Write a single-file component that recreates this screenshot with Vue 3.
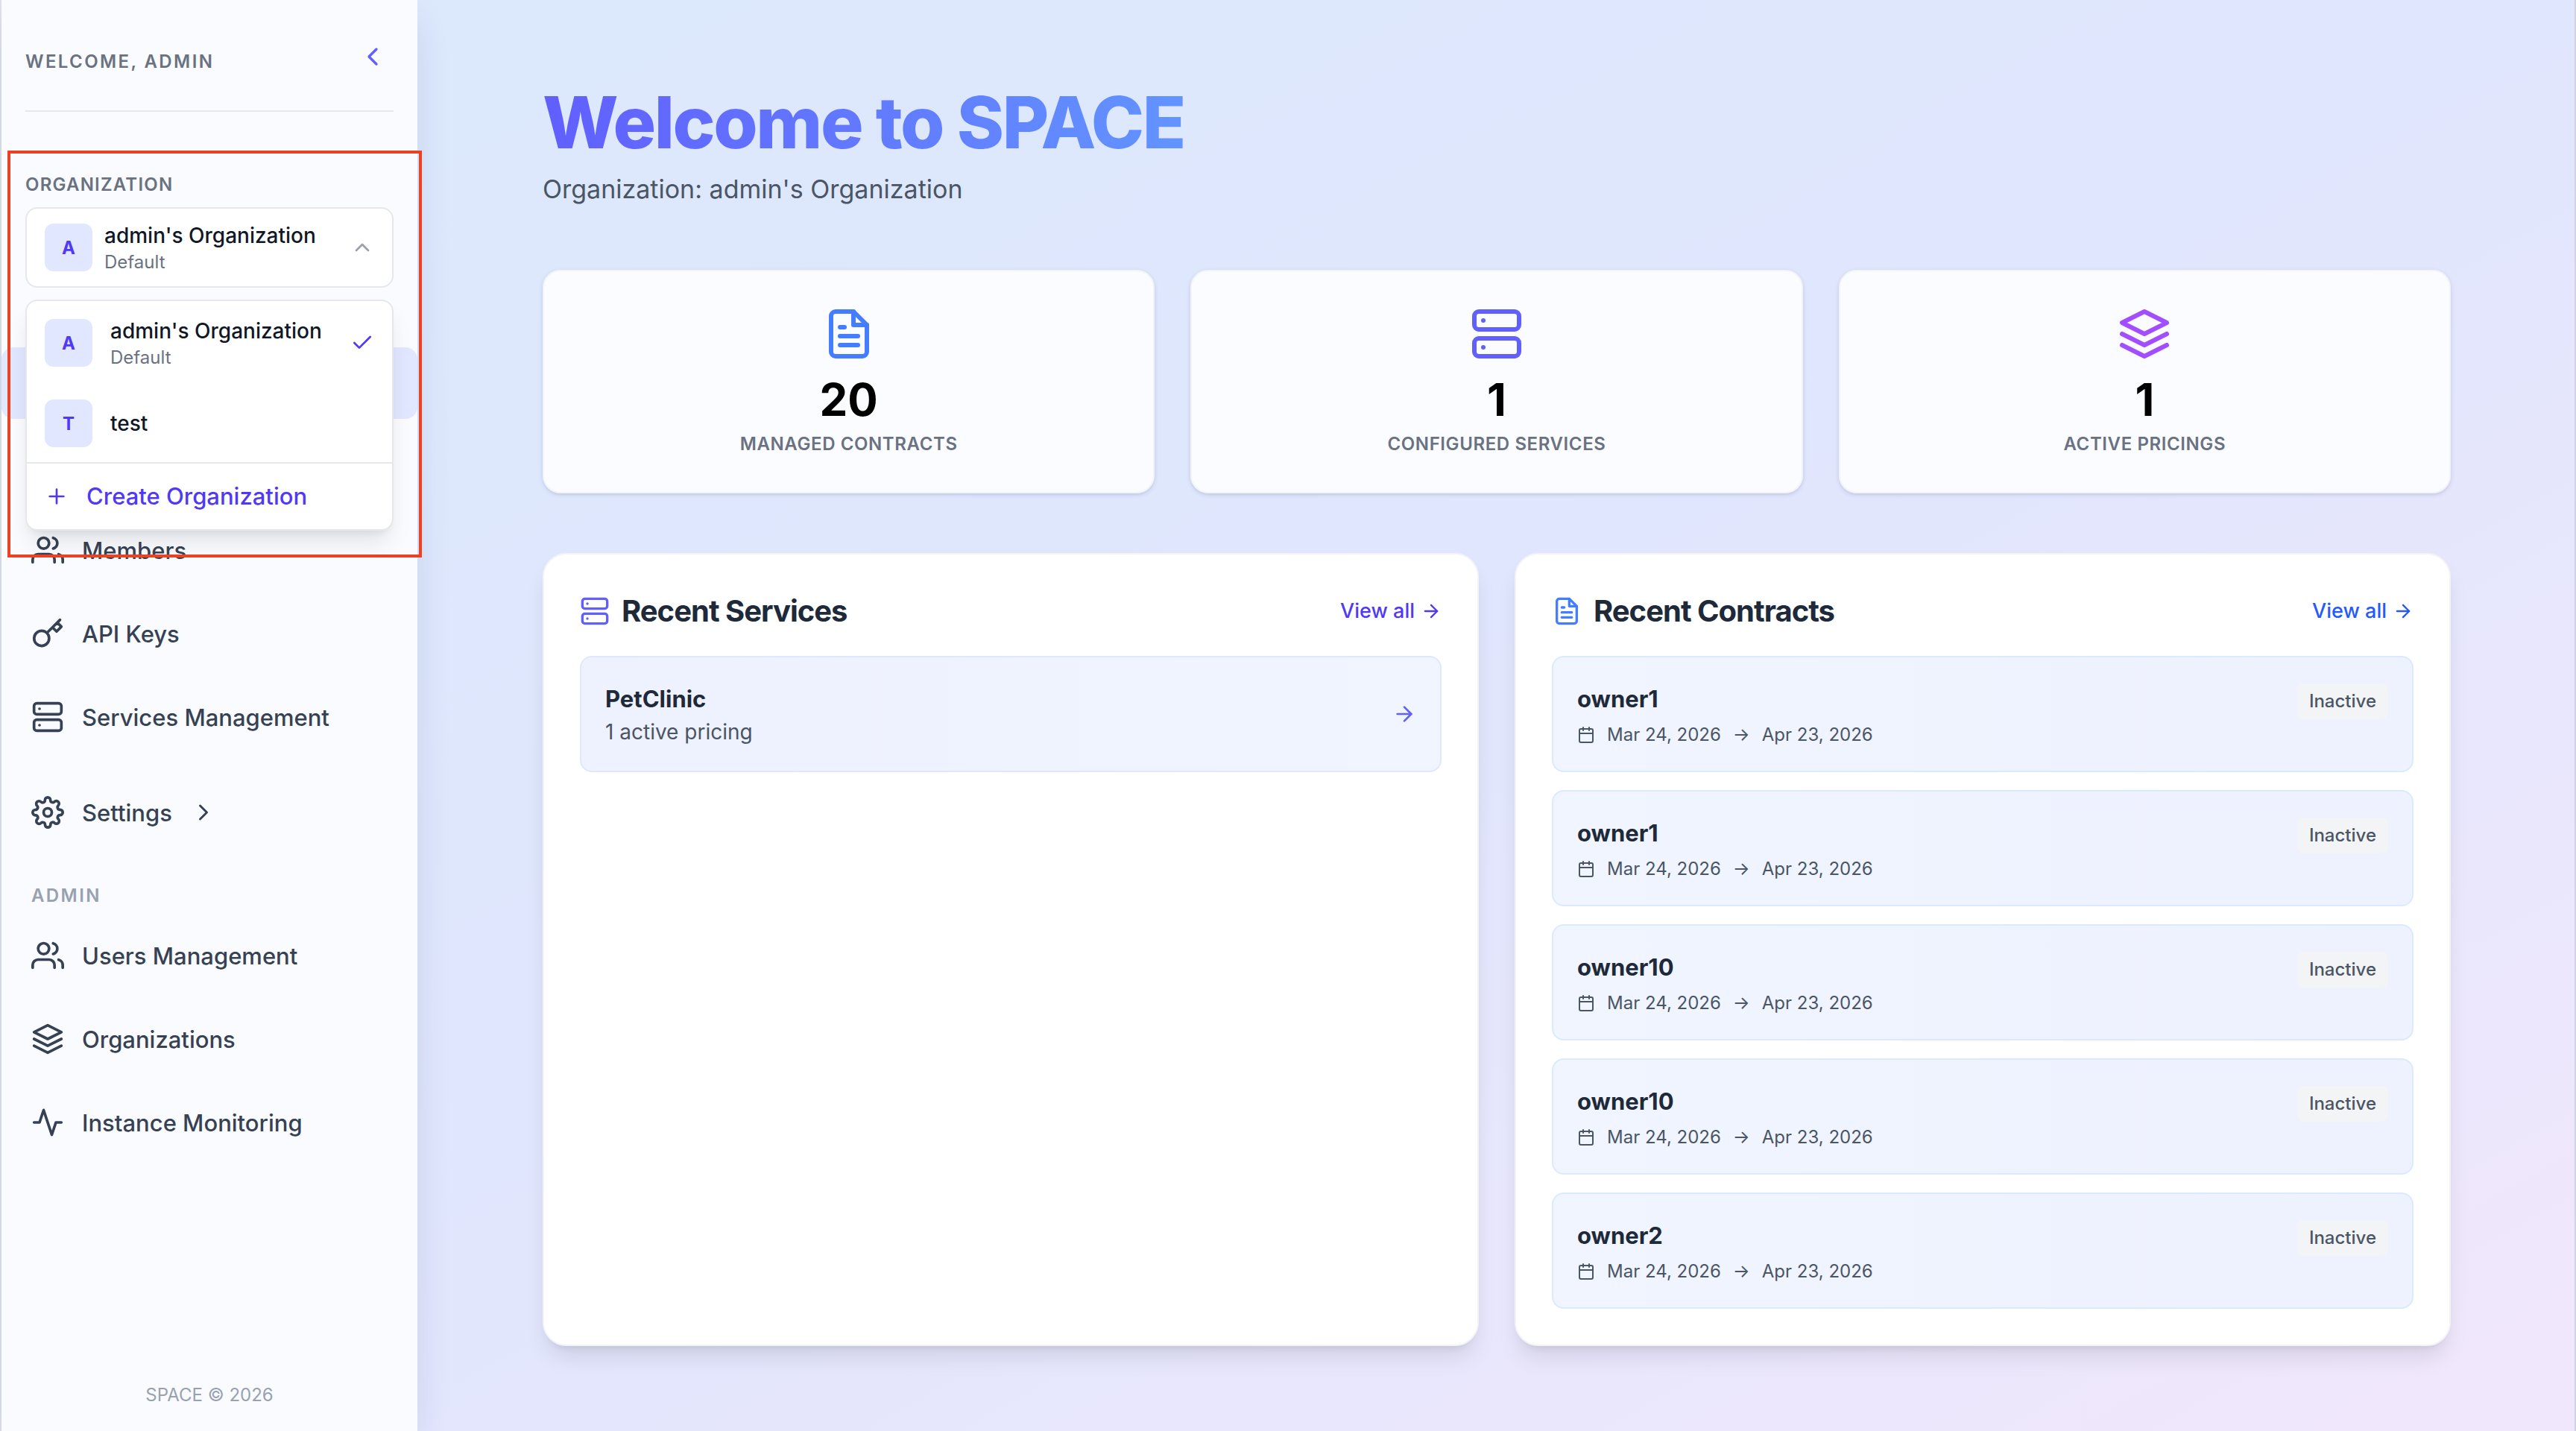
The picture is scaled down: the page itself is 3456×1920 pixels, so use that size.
<script setup>
import { ref, h } from 'vue';

// 24x24 outline icons
const iconPaths = {
  users: [
    'M17 21v-2a4 4 0 0 0-4-4H5a4 4 0 0 0-4 4v2',
    'M9 3a4 4 0 1 0 0 8 4 4 0 0 0 0-8z',
    'M23 21v-2a4 4 0 0 0-3-3.87',
    'M16 3.13a4 4 0 0 1 0 7.75',
  ],
  key: ['M21 2l-2 2m-7.61 7.61a5.5 5.5 0 1 1-7.778 7.778 5.5 5.5 0 0 1 7.777-7.777zm0 0L15.5 7.5m0 0l3 3L22 7l-3-3m-3.5 3.5L19 4'],
  server: [
    'M4 2h16a2 2 0 0 1 2 2v4a2 2 0 0 1-2 2H4a2 2 0 0 1-2-2V4a2 2 0 0 1 2-2z',
    'M4 14h16a2 2 0 0 1 2 2v4a2 2 0 0 1-2 2H4a2 2 0 0 1-2-2v-4a2 2 0 0 1 2-2z',
    'M6 6h.01',
    'M6 18h.01',
  ],
  settings: [
    'M12 9a3 3 0 1 0 0 6 3 3 0 0 0 0-6z',
    'M19.4 15a1.65 1.65 0 0 0 .33 1.82l.06.06a2 2 0 0 1 0 2.83 2 2 0 0 1-2.83 0l-.06-.06a1.65 1.65 0 0 0-1.82-.33 1.65 1.65 0 0 0-1 1.51V21a2 2 0 0 1-2 2 2 2 0 0 1-2-2v-.09A1.65 1.65 0 0 0 9 19.4a1.65 1.65 0 0 0-1.82.33l-.06.06a2 2 0 0 1-2.83 0 2 2 0 0 1 0-2.83l.06-.06a1.65 1.65 0 0 0 .33-1.82 1.65 1.65 0 0 0-1.51-1H3a2 2 0 0 1-2-2 2 2 0 0 1 2-2h.09A1.65 1.65 0 0 0 4.6 9a1.65 1.65 0 0 0-.33-1.82l-.06-.06a2 2 0 0 1 0-2.83 2 2 0 0 1 2.83 0l.06.06a1.65 1.65 0 0 0 1.82.33H9a1.65 1.65 0 0 0 1-1.51V3a2 2 0 0 1 2-2 2 2 0 0 1 2 2v.09a1.65 1.65 0 0 0 1 1.51 1.65 1.65 0 0 0 1.82-.33l.06-.06a2 2 0 0 1 2.83 0 2 2 0 0 1 0 2.83l-.06.06a1.65 1.65 0 0 0-.33 1.82V9a1.65 1.65 0 0 0 1.51 1H21a2 2 0 0 1 2 2 2 2 0 0 1-2 2h-.09a1.65 1.65 0 0 0-1.51 1z',
  ],
  layers: ['M12 2L2 7l10 5 10-5-10-5z', 'M2 17l10 5 10-5', 'M2 12l10 5 10-5'],
  activity: ['M22 12h-4l-3 9L9 3l-3 9H2'],
  file: [
    'M14 2H6a2 2 0 0 0-2 2v16a2 2 0 0 0 2 2h12a2 2 0 0 0 2-2V8z',
    'M14 2v6h6',
    'M16 13H8',
    'M16 17H8',
    'M10 9H8',
  ],
  calendar: [
    'M5 4h14a2 2 0 0 1 2 2v14a2 2 0 0 1-2 2H5a2 2 0 0 1-2-2V6a2 2 0 0 1 2-2z',
    'M16 2v4',
    'M8 2v4',
    'M3 10h18',
  ],
  arrow: ['M5 12h14', 'M12 5l7 7-7 7'],
  left: ['M15 18l-6-6 6-6'],
  right: ['M9 18l6-6-6-6'],
  up: ['M18 15l-6-6-6 6'],
  check: ['M20 6L9 17l-5-5'],
  plus: ['M12 5v14', 'M5 12h14'],
};

const Icon = (props) =>
  h('svg', { viewBox: '0 0 24 24', class: 'icon', 'aria-hidden': 'true' },
    iconPaths[props.name].map((d) => h('path', { d })));
Icon.props = ['name'];

const menuOpen = ref(true);
const selected = ref(0);
const organizations = [
  { name: "admin's Organization", initial: 'A', isDefault: true },
  { name: 'test', initial: 'T', isDefault: false },
];

const pickOrganization = (index) => {
  selected.value = index;
  menuOpen.value = false;
};

const mainLinks = [
  { label: 'Members', icon: 'users' },
  { label: 'API Keys', icon: 'key' },
  { label: 'Services Management', icon: 'server' },
];
const adminLinks = [
  { label: 'Users Management', icon: 'users' },
  { label: 'Organizations', icon: 'layers' },
  { label: 'Instance Monitoring', icon: 'activity' },
];

const stats = [
  { value: 20, label: 'Managed Contracts', icon: 'file', tone: 'blue' },
  { value: 1, label: 'Configured Services', icon: 'server', tone: 'indigo' },
  { value: 1, label: 'Active Pricings', icon: 'layers', tone: 'purple' },
];

const services = [{ name: 'PetClinic', detail: '1 active pricing' }];
const contracts = ['owner1', 'owner1', 'owner10', 'owner10', 'owner2'].map((owner) => ({
  owner,
  start: 'Mar 24, 2026',
  end: 'Apr 23, 2026',
  status: 'Inactive',
}));
</script>

<template>
  <div class="page">
    <aside class="sidebar">
      <div class="sidebar-head">
        <span class="greeting">WELCOME, ADMIN</span>
        <button type="button" class="collapse" aria-label="Collapse sidebar"><Icon name="left" /></button>
      </div>

      <div class="org">
        <div id="org-label" class="org-label">ORGANIZATION</div>
        <div class="org-picker">
          <button type="button" class="org-current" aria-labelledby="org-label" :aria-expanded="menuOpen" @click="menuOpen = !menuOpen">
            <span class="avatar">{{ organizations[selected].initial }}</span>
            <span class="org-text">
              <span class="org-name">{{ organizations[selected].name }}</span>
              <span v-if="organizations[selected].isDefault" class="org-note">Default</span>
            </span>
            <Icon name="up" class="small-icon muted" />
          </button>

          <div v-if="menuOpen" class="org-menu">
            <button v-for="(org, index) in organizations" :key="org.name" type="button" class="org-option" @click="pickOrganization(index)">
              <span class="avatar">{{ org.initial }}</span>
              <span class="org-text">
                <span class="org-name">{{ org.name }}</span>
                <span v-if="org.isDefault" class="org-note">Default</span>
              </span>
              <Icon v-if="index === selected" name="check" class="small-icon" />
            </button>
            <button type="button" class="org-create">
              <Icon name="plus" class="small-icon" />
              <span>Create Organization</span>
            </button>
          </div>
        </div>
      </div>

      <nav class="nav">
        <a href="#" class="nav-link active" aria-label="Dashboard"></a>
        <a href="#" class="nav-link" aria-label="Contracts"></a>
        <a v-for="link in mainLinks" :key="link.label" href="#" class="nav-link">
          <Icon :name="link.icon" />
          <span>{{ link.label }}</span>
        </a>
        <button type="button" class="nav-link settings">
          <Icon name="settings" />
          <span>Settings</span>
          <Icon name="right" class="nav-chevron" />
        </button>
        <div class="nav-title">ADMIN</div>
        <a v-for="link in adminLinks" :key="link.label" href="#" class="nav-link">
          <Icon :name="link.icon" />
          <span>{{ link.label }}</span>
        </a>
      </nav>

      <footer class="sidebar-foot">SPACE © 2026</footer>
      <div class="highlight"></div>
    </aside>

    <main class="main">
      <div class="content">
        <header class="hero">
          <h1>Welcome to SPACE</h1>
          <p>Organization: admin's Organization</p>
        </header>

        <section class="stats">
          <div v-for="stat in stats" :key="stat.label" class="stat">
            <Icon :name="stat.icon" :class="stat.tone" />
            <div class="stat-value">{{ stat.value }}</div>
            <div class="stat-label">{{ stat.label }}</div>
          </div>
        </section>

        <div class="panels">
          <section class="panel">
            <div class="panel-head">
              <Icon name="server" class="indigo" />
              <h2>Recent Services</h2>
              <a href="#" class="view-all">View all <Icon name="arrow" /></a>
            </div>
            <div v-for="service in services" :key="service.name" class="entry service">
              <div>
                <h3>{{ service.name }}</h3>
                <p class="detail">{{ service.detail }}</p>
              </div>
              <Icon name="arrow" class="small-icon indigo" />
            </div>
          </section>

          <section class="panel">
            <div class="panel-head">
              <Icon name="file" class="blue" />
              <h2>Recent Contracts</h2>
              <a href="#" class="view-all view-blue">View all <Icon name="arrow" /></a>
            </div>
            <div v-for="(contract, index) in contracts" :key="index" class="entry contract">
              <div>
                <h3>{{ contract.owner }}</h3>
                <p class="dates">
                  <Icon name="calendar" />
                  <span>{{ contract.start }}</span>
                  <span>→</span>
                  <span>{{ contract.end }}</span>
                </p>
              </div>
              <span class="badge">{{ contract.status }}</span>
            </div>
          </section>
        </div>
      </div>
    </main>
  </div>
</template>

<style>
body {
  margin: 0;
}
</style>

<style scoped>
.page {
  display: flex;
  min-height: 100vh;
  box-sizing: border-box;
  border-left: 2px solid #dfe2ea;
  border-right: 2px solid #d3d1e6;
  background: linear-gradient(to bottom right, #dbe9fc, #e0e6fd 50%, #f1e7fc);
  font-family: Inter, "Liberation Sans", sans-serif;
  color: #1e2939;
}

button {
  border: 0;
  background: none;
  font: inherit;
  text-align: left;
  cursor: pointer;
}

a {
  text-decoration: none;
}

h1, h2, h3, p {
  margin: 0;
}

.icon {
  flex: none;
  width: 44px;
  height: 44px;
  fill: none;
  stroke: currentColor;
  stroke-width: 2;
  stroke-linecap: round;
  stroke-linejoin: round;
}

.small-icon {
  width: 32px;
  height: 32px;
}

.muted {
  color: #99a1af;
}
.blue {
  color: #447dff;
}
.indigo {
  color: #615fff;
}
.purple {
  color: #a24dff;
}

/*-- sidebar --*/
.sidebar {
  position: relative;
  z-index: 1;
  flex: none;
  display: flex;
  flex-direction: column;
  box-sizing: border-box;
  width: 558px;
  background: rgba(255, 255, 255, .82);
  box-shadow: 0 20px 50px -10px rgba(30, 41, 90, .16);
}

.sidebar-head {
  display: flex;
  align-items: center;
  justify-content: space-between;
  margin: 0 32px;
  padding: 48px 0 44px;
  border-bottom: 2px solid #e5e7eb;
}

.greeting {
  margin-top: 14px;
  font-size: 24px;
  line-height: 32px;
  font-weight: 600;
  letter-spacing: .1em;
  color: #6a7282;
}

.collapse {
  display: flex;
  padding: 8px;
  color: #615fff;
}
.collapse .icon {
  width: 40px;
  height: 40px;
}

.org {
  margin: 80px 32px 0;
}

.org-label {
  padding-top: 2px;
  margin-bottom: 14px;
  font-size: 24px;
  line-height: 32px;
  font-weight: 600;
  letter-spacing: .05em;
  color: #6a7282;
}

.org-picker {
  position: relative;
}

.org-current {
  display: flex;
  align-items: center;
  gap: 16px;
  box-sizing: border-box;
  width: 100%;
  padding: 16px 24px;
  border: 2px solid #e5e7eb;
  border-radius: 16px;
  background: #fff;
}

.avatar {
  flex: none;
  display: flex;
  align-items: center;
  justify-content: center;
  width: 64px;
  height: 64px;
  border-radius: 12px;
  background: #e0e7ff;
  font-size: 24px;
  font-weight: 700;
  color: #4f39f6;
}

.org-text {
  flex: 1;
  display: flex;
  flex-direction: column;
}

.org-name {
  font-size: 28px;
  line-height: 40px;
  font-weight: 500;
  color: #101828;
}

.org-note {
  font-size: 24px;
  line-height: 32px;
  color: #6a7282;
}

.org-menu {
  position: absolute;
  z-index: 2;
  top: 100%;
  left: 0;
  right: 0;
  margin-top: 16px;
  border: 2px solid #e5e7eb;
  border-radius: 16px;
  background: #fff;
  box-shadow: 0 20px 30px -6px rgba(0, 0, 0, .1), 0 8px 12px -8px rgba(0, 0, 0, .1);
}

.org-option,
.org-create {
  display: flex;
  align-items: center;
  gap: 24px;
  width: 100%;
  padding: 20px 24px;
}
.org-option .small-icon {
  color: #4f39f6;
}

.org-create {
  border-top: 2px solid #e5e7eb;
  font-size: 31px;
  line-height: 48px;
  font-weight: 500;
  color: #4f39f6;
}

.nav {
  display: flex;
  flex-direction: column;
  gap: 16px;
  margin-top: 80px;
}

.nav-link {
  display: flex;
  align-items: center;
  gap: 24px;
  height: 96px;
  padding: 0 40px;
  border-radius: 16px;
  font-size: 31px;
  line-height: 48px;
  font-weight: 500;
  color: #364153;
}
.nav-link span {
  padding-top: 2px;
}
.nav-link.active {
  background: #e0e7ff;
}
.nav-link.settings {
  margin-top: 16px;
}

.nav-chevron {
  width: 36px;
  height: 36px;
}

.nav-title {
  margin-top: 32px;
  padding: 0 40px;
  font-size: 24px;
  line-height: 32px;
  font-weight: 600;
  letter-spacing: .1em;
  color: #99a1af;
}

.sidebar-foot {
  margin-top: auto;
  padding: 32px 0;
  font-size: 24px;
  line-height: 32px;
  text-align: center;
  color: #99a1af;
}

/*-- red frame round the organization picker --*/
.highlight {
  position: absolute;
  z-index: 3;
  top: 202px;
  left: 8px;
  right: -6px;
  height: 538px;
  border: 4px solid #ec4224;
  pointer-events: none;
}

/*-- main column --*/
.main {
  flex: 1;
  min-width: 0;
  padding: 112px 80px 112px 82px;
}

.content {
  max-width: 2560px;
  margin: 0 auto;
}

.hero {
  margin-bottom: 78px;
}
.hero h1 {
  width: fit-content;
  font-size: 96px;
  line-height: 104px;
  font-weight: 800;
  letter-spacing: -.025em;
  color: transparent;
  background: linear-gradient(to right, #615fff, #6294ff);
  background-clip: text;
}
.hero p {
  margin-top: 8px;
  font-size: 34px;
  line-height: 60px;
  color: #4a5565;
}

.stats {
  display: grid;
  grid-template-columns: repeat(3, 1fr);
  gap: 48px;
}

.stat {
  display: flex;
  flex-direction: column;
  align-items: center;
  padding: 48px;
  border: 2px solid #f3f4f6;
  border-radius: 24px;
  background: rgba(255, 255, 255, .85);
  box-shadow: 0 2px 6px rgba(30, 41, 90, .12), 0 2px 4px -2px rgba(30, 41, 90, .12);
}
.stat .icon {
  width: 72px;
  height: 72px;
}

.stat-value {
  margin: 16px 0 8px;
  font-size: 60px;
  line-height: 72px;
  font-weight: 700;
  color: #000;
}

.stat-label {
  font-size: 24px;
  line-height: 32px;
  font-weight: 600;
  letter-spacing: .025em;
  text-transform: uppercase;
  color: #6a7282;
}

.panels {
  display: grid;
  grid-template-columns: repeat(2, 1fr);
  gap: 48px;
  margin-top: 80px;
}

.panel {
  display: flex;
  flex-direction: column;
  gap: 24px;
  padding: 48px;
  border: 2px solid #f3f4f6;
  border-radius: 32px;
  background: #fff;
  box-shadow: 0 20px 30px -6px rgba(0, 0, 0, .1), 0 8px 12px -8px rgba(0, 0, 0, .1);
}

.panel-head {
  display: flex;
  align-items: center;
  gap: 16px;
  margin-bottom: 8px;
}
.panel-head > .icon {
  width: 40px;
  height: 40px;
}
.panel-head h2 {
  flex: 1;
  font-size: 40px;
  line-height: 56px;
  font-weight: 700;
  letter-spacing: -.025em;
}

.view-all {
  display: flex;
  align-items: center;
  gap: 8px;
  font-size: 27px;
  line-height: 40px;
  font-weight: 500;
  color: #4f39f6;
}
.view-all .icon {
  width: 28px;
  height: 28px;
}
.view-blue {
  color: #2459fc;
}

.entry {
  display: flex;
  justify-content: space-between;
  padding: 32px;
  border: 2px solid #e0e7ff;
  border-radius: 16px;
}
.entry h3 {
  font-size: 31px;
  line-height: 48px;
  font-weight: 700;
}

.service {
  align-items: center;
  background: linear-gradient(to right, #eef1fe, #f0f5ff);
}
.contract {
  align-items: flex-start;
  border-color: #dbeafe;
  background: linear-gradient(to right, #f0f5ff, #eef1fe);
}

.detail {
  font-size: 28px;
  line-height: 40px;
  color: #4a5565;
}

.dates {
  display: flex;
  align-items: center;
  gap: 16px;
  margin-top: 8px;
  font-size: 24px;
  line-height: 32px;
  color: #4a5565;
}
.dates .icon {
  width: 24px;
  height: 24px;
}

.badge {
  margin-top: 3px;
  padding: 8px 16px;
  border-radius: 8px;
  background: #f3f4f6;
  font-size: 24px;
  line-height: 32px;
  font-weight: 500;
  color: #4a5565;
}
</style>
